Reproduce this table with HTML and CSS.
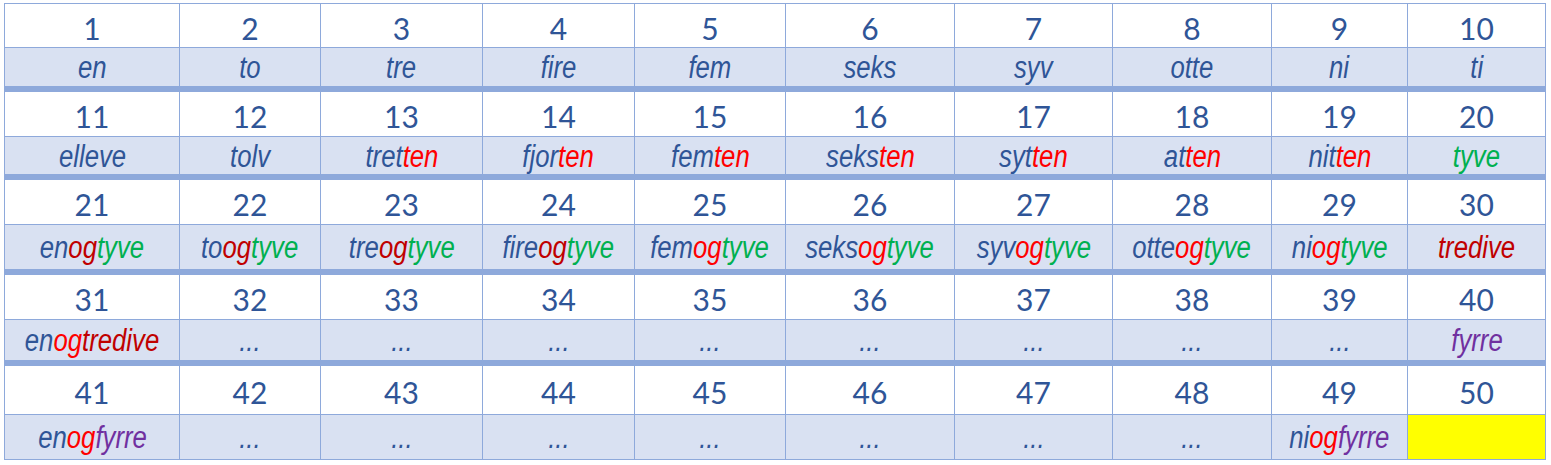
FILE: index.html
```html
<!DOCTYPE html>
<html lang="da">
<head>
<meta charset="utf-8">
<title>Tal</title>
<link rel="stylesheet" href="styles.css">
</head>
<body>
<table class="grid">
  <colgroup>
    <col class="c1"><col class="c2"><col class="c3"><col class="c4"><col class="c5">
    <col class="c6"><col class="c7"><col class="c8"><col class="c9"><col class="c10">
  </colgroup>
  <tbody>
    <tr class="num r1"><td>1</td><td>2</td><td>3</td><td>4</td><td>5</td><td>6</td><td>7</td><td>8</td><td>9</td><td>10</td></tr>
    <tr class="word w1 sep"><td><span class="t">en</span></td><td><span class="t">to</span></td><td><span class="t">tre</span></td><td><span class="t">fire</span></td><td><span class="t">fem</span></td><td><span class="t">seks</span></td><td><span class="t">syv</span></td><td><span class="t">otte</span></td><td><span class="t">ni</span></td><td><span class="t">ti</span></td></tr>

    <tr class="num r2"><td>11</td><td>12</td><td>13</td><td>14</td><td>15</td><td>16</td><td>17</td><td>18</td><td>19</td><td>20</td></tr>
    <tr class="word w2 sep"><td><span class="t">elleve</span></td><td><span class="t">tolv</span></td><td><span class="t">tret<span class="red">ten</span></span></td><td><span class="t">fjor<span class="red">ten</span></span></td><td><span class="t">fem<span class="red">ten</span></span></td><td><span class="t">seks<span class="red">ten</span></span></td><td><span class="t">syt<span class="red">ten</span></span></td><td><span class="t">at<span class="red">ten</span></span></td><td><span class="t">nit<span class="red">ten</span></span></td><td><span class="t green">tyve</span></td></tr>

    <tr class="num r3"><td>21</td><td>22</td><td>23</td><td>24</td><td>25</td><td>26</td><td>27</td><td>28</td><td>29</td><td>30</td></tr>
    <tr class="word w3 sep"><td><span class="t">en<span class="dred">og</span><span class="green">tyve</span></span></td><td><span class="t">to<span class="dred">og</span><span class="green">tyve</span></span></td><td><span class="t">tre<span class="dred">og</span><span class="green">tyve</span></span></td><td><span class="t">fire<span class="dred">og</span><span class="green">tyve</span></span></td><td><span class="t">fem<span class="red">og</span><span class="green">tyve</span></span></td><td><span class="t">seks<span class="red">og</span><span class="green">tyve</span></span></td><td><span class="t">syv<span class="red">og</span><span class="green">tyve</span></span></td><td><span class="t">otte<span class="red">og</span><span class="green">tyve</span></span></td><td><span class="t">ni<span class="red">og</span><span class="green">tyve</span></span></td><td><span class="t dred">tredive</span></td></tr>

    <tr class="num r4"><td>31</td><td>32</td><td>33</td><td>34</td><td>35</td><td>36</td><td>37</td><td>38</td><td>39</td><td>40</td></tr>
    <tr class="word w4 sep"><td><span class="t">en<span class="red">og</span><span class="dred">tredive</span></span></td><td><span class="t">...</span></td><td><span class="t">...</span></td><td><span class="t">...</span></td><td><span class="t">...</span></td><td><span class="t">...</span></td><td><span class="t">...</span></td><td><span class="t">...</span></td><td><span class="t">...</span></td><td><span class="t purple">fyrre</span></td></tr>

    <tr class="num r5"><td>41</td><td>42</td><td>43</td><td>44</td><td>45</td><td>46</td><td>47</td><td>48</td><td>49</td><td>50</td></tr>
    <tr class="word w5"><td><span class="t">en<span class="red">og</span><span class="purple">fyrre</span></span></td><td><span class="t">...</span></td><td><span class="t">...</span></td><td><span class="t">...</span></td><td><span class="t">...</span></td><td><span class="t">...</span></td><td><span class="t">...</span></td><td><span class="t">...</span></td><td><span class="t">ni<span class="red">og</span><span class="purple">fyrre</span></span></td><td class="hl"></td></tr>
  </tbody>
</table>
</body>
</html>
```

FILE: styles.css
```css
html, body {
  margin: 0;
  padding: 0;
  background: #ffffff;
}

body {
  padding: 3px 0 0 4px;
}

.grid {
  border-collapse: separate;
  border-spacing: 0;
  table-layout: fixed;
  width: 1542px;
  border-top: 1px solid #8ea9db;
  border-left: 1px solid #8ea9db;
}

.c1 { width: 175px; }
.c2 { width: 141px; }
.c3 { width: 162px; }
.c4 { width: 152px; }
.c5 { width: 151px; }
.c6 { width: 169px; }
.c7 { width: 158px; }
.c8 { width: 159px; }
.c9 { width: 136px; }
.c10 { width: 138px; }

.grid td {
  box-sizing: border-box;
  padding: 0;
  border-right: 1px solid #8ea9db;
  border-bottom: 1px solid #8ea9db;
  text-align: center;
  vertical-align: middle;
  line-height: 1;
  overflow: hidden;
  white-space: nowrap;
}

.num td {
  font-family: Lato, "Open Sans", sans-serif;
  font-size: 30px;
  color: #2f5597;
  padding-top: 4px;
}

.word td {
  font-family: "Liberation Sans", Arial, sans-serif;
  font-style: italic;
  font-size: 31px;
  color: #2f5597;
  background: #d9e1f2;
  padding-top: 1px;
}

.t {
  display: inline-block;
  transform: scaleX(0.83);
}

.word.sep td {
  border-bottom: 6px solid #8ea9db;
}

.r1 td { height: 44px; }
.w1 td { height: 44px; }
.r2 td { height: 45px; }
.w2 td { height: 43px; }
.r3 td { height: 45px; }
.w3 td { height: 50px; }
.r4 td { height: 45px; }
.w4 td { height: 46px; }
.r5 td { height: 49px; }
.w5 td { height: 45px; }

.red { color: #ff0000; }
.dred { color: #c00000; }
.green { color: #00b050; }
.purple { color: #7030a0; }

.grid td.hl {
  background: #ffff00;
}
```
